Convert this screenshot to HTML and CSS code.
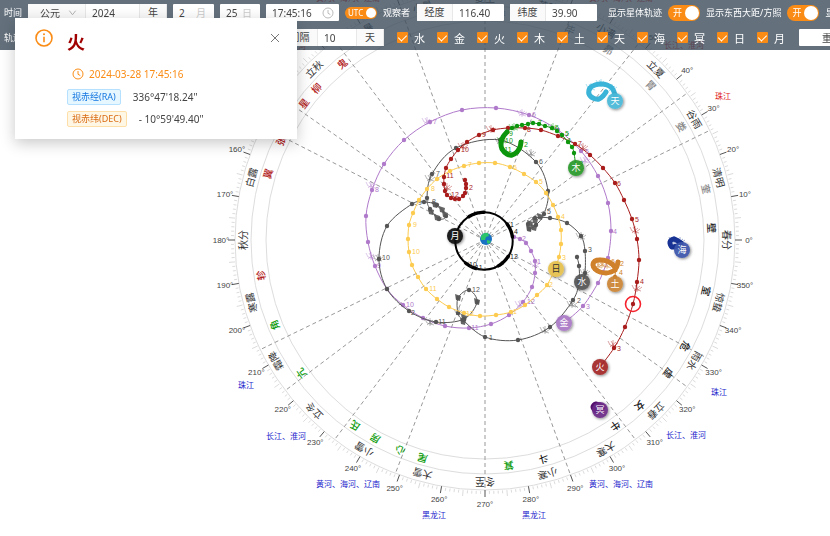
FILE: index.html
```html
<!DOCTYPE html>
<html lang="zh-CN">
<head>
    <meta charset="UTF-8">
    <meta name="viewport" content="width=device-width, initial-scale=1.0">
    <title>星体轨迹</title>
    <link rel="stylesheet" href="styles.css">
</head>
<body>
    <main class="sky">
        <svg id="chart" class="chart" viewBox="0 0 830 536" role="img" aria-label="星体轨迹图">
            <defs>
                <filter id="shadow" x="-50%" y="-50%" width="200%" height="200%">
                    <feDropShadow dx="1" dy="1" stdDeviation="1.5" flood-color="#000" flood-opacity="0.5"/>
                </filter>
            </defs>
            <g id="dial"></g>
            <g id="tracks"></g>
            <g id="bodies"></g>
        </svg>
    </main>

    <header class="toolbar">
        <div class="row">
            <span class="label">时间</span>
            <div class="group">
                <div class="select">
                    <select aria-label="纪元"><option>公元</option><option>公元前</option></select>
                    <svg viewBox="0 0 10 10"><path d="M1.5 3 L5 7.5 L8.5 3"/></svg>
                </div>
                <input class="year" type="text" value="2024" aria-label="年份">
                <span class="addon year-unit">年</span>
            </div>
            <div class="picker month-picker">
                <input type="text" value="2" aria-label="月份"><span>月</span>
            </div>
            <div class="picker day">
                <input type="text" value="25" aria-label="日期"><span>日</span>
            </div>
            <div class="picker time">
                <input type="text" value="17:45:16" aria-label="时刻">
                <svg viewBox="0 0 12 12"><circle cx="6" cy="6" r="5"/><path d="M6 3 V6.3 L8.3 7.5"/></svg>
            </div>
            <button class="switch small" type="button" role="switch" aria-checked="true">UTC</button>
            <span class="label observer">观察者</span>
            <div class="group">
                <label class="addon coord" for="lng">经度</label>
                <input class="value" id="lng" type="text" value="116.40">
            </div>
            <div class="group">
                <label class="addon coord" for="lat">纬度</label>
                <input class="value" id="lat" type="text" value="39.90">
            </div>
            <span class="label spaced">显示星体轨迹</span>
            <button class="switch" type="button" role="switch" aria-checked="true" aria-label="显示星体轨迹">开</button>
            <span class="label">显示东西大距/方照</span>
            <button class="switch" type="button" role="switch" aria-checked="true" aria-label="显示东西大距/方照">开</button>
            <span class="label">显示留</span>
        </div>
        <div class="row">
            <span class="label">轨迹</span>
            <div class="group range">
                <label class="addon coord" for="span">时长</label>
                <input id="span" type="text" value="365">
                <span class="addon unit">天</span>
            </div>
            <div class="group interval">
                <label class="addon coord" for="step">间隔</label>
                <input id="step" type="text" value="10">
                <span class="addon unit">天</span>
            </div>
            <div class="checks">
                <label><input type="checkbox" checked>水</label>
                <label><input type="checkbox" checked>金</label>
                <label><input type="checkbox" checked>火</label>
                <label><input type="checkbox" checked>木</label>
                <label><input type="checkbox" checked>土</label>
                <label><input type="checkbox" checked>天</label>
                <label><input type="checkbox" checked>海</label>
                <label><input type="checkbox" checked>冥</label>
                <label><input type="checkbox" checked>日</label>
                <label><input type="checkbox" checked>月</label>
            </div>
            <button class="reset" type="button">重置</button>
        </div>
    </header>

    <section class="notice" role="alert">
        <svg class="info" viewBox="0 0 18 18">
            <circle cx="9" cy="9" r="8"/>
            <path d="M9 7.8 V13.2"/>
            <circle class="dot" cx="9" cy="5.2" r="1"/>
        </svg>
        <div class="notice-body">
            <h2>火</h2>
            <p class="moment">
                <svg viewBox="0 0 12 12"><circle cx="6" cy="6" r="5"/><path d="M6 3 V6.3 L8.3 7.5"/></svg>
                2024-03-28 17:45:16
            </p>
            <p><span class="tag blue">视赤经(RA)</span>336°47'18.24"</p>
            <p><span class="tag orange">视赤纬(DEC)</span>- 10°59'49.40"</p>
        </div>
        <button class="close" type="button" aria-label="关闭">
            <svg viewBox="0 0 10 10"><path d="M1 1 L9 9 M9 1 L1 9"/></svg>
        </button>
    </section>

    <script src="script.js"></script>
</body>
</html>
```

FILE: styles.css
```css
* {
    margin: 0;
    padding: 0;
    box-sizing: border-box;
}

body {
    font-family: "Noto Sans", "Noto Sans CJK SC", sans-serif;
    font-size: 10px;
    color: #444;
    background: #fff;
    overflow: hidden;
}

input, select, button {
    font: inherit;
    color: inherit;
    border: 0;
    outline: 0;
    background: none;
    min-width: 0;
}

/* chart */
.sky {
    height: 100vh;
}

.chart {
    display: block;
    width: 100%;
    height: 100%;
}

.chart text {
    text-anchor: middle;
    dominant-baseline: central;
}

.ring {
    fill: none;
    stroke: #ddd;
}

.ray {
    stroke: #999;
    stroke-dasharray: 4 3;
}

.tick { stroke: #ccc; stroke-width: 0.7; }
.tick.major { stroke: #555; stroke-width: 1; }

.degree {
    font: 8px "Liberation Sans", Arial, sans-serif;
    fill: #444;
}

.term { font-size: 10px; fill: #333; }
.mansion { font-size: 10px; font-weight: 500; }
.river { font-size: 8px; }

.track {
    fill: none;
    stroke-linejoin: round;
    stroke-linecap: round;
}

.month {
    font: 7px "Liberation Sans", Arial, sans-serif;
}

.station {
    fill: none;
    stroke-width: 0.7;
    opacity: 0.6;
}

.name { font-size: 9px; }

/* toolbar */
.toolbar {
    position: fixed;
    top: 0;
    left: 0;
    right: 0;
    padding: 4px;
    background: rgba(61, 77, 93, 0.8);
    overflow: hidden;
}

.row {
    display: flex;
    align-items: center;
    gap: 6px;
    height: 17px;
    white-space: nowrap;
}

.row + .row {
    margin-top: 8px;
}

.row > * {
    flex-shrink: 0;
}

.label {
    font-size: 9px;
    color: #fff;
}

.observer { width: 28px; }
.spaced { margin-left: 5px; }

.group, .picker {
    display: flex;
    align-items: center;
    height: 17px;
    background: #fff;
    border-radius: 1px;
    overflow: hidden;
}

.group input {
    height: 17px;
    padding-left: 6px;
}

.addon {
    height: 17px;
    line-height: 17px;
    text-align: center;
    background: #fafafa;
    border-right: 1px solid #e8e8e8;
}

.coord { width: 36px; }
.value { width: 51px; }

.select {
    position: relative;
    width: 58px;
    border-right: 1px solid #e8e8e8;
}

.select select {
    width: 100%;
    height: 17px;
    padding-left: 12px;
    appearance: none;
    background: #fafafa;
}

.select svg {
    position: absolute;
    right: 8px;
    top: 4px;
    width: 9px;
    fill: none;
    stroke: #aaa;
    pointer-events: none;
}

.year { width: 53px; }
.year-unit { width: 28px; border-left: 1px solid #e8e8e8; }

.picker {
    padding: 0 8px 0 6px;
}

.picker input {
    flex: 1;
    height: 17px;
}

.picker span { color: #ccc; }

.picker svg {
    width: 12px;
    fill: none;
    stroke: #bbb;
}

.month-picker { width: 41px; }
.day { width: 40px; }
.time { width: 73px; padding-right: 5px; }

.switch {
    position: relative;
    width: 32px;
    height: 16px;
    padding-left: 5px;
    line-height: 16px;
    font-size: 9px;
    text-align: left;
    color: #fff;
    background: #fa8c16;
    border-radius: 8px;
}

.switch::after {
    content: '';
    position: absolute;
    top: 1px;
    right: 1px;
    width: 14px;
    height: 14px;
    border-radius: 50%;
    background: #fff;
}

.switch.small {
    height: 12px;
    padding-left: 3px;
    line-height: 12px;
    font-size: 8px;
}

.switch.small::after {
    width: 10px;
    height: 10px;
}

.range { width: 120px; }
.range input { width: 56px; }
.interval { margin-left: 128px; }
.interval input { width: 38px; }
.unit { width: 28px; border-left: 1px solid #e8e8e8; }

.checks {
    display: flex;
    padding-left: 7px;
    color: #fff;
    font-size: 11px;
}

.checks label {
    display: flex;
    align-items: center;
    gap: 6px;
    width: 40px;
}

.checks label:last-child {
    width: 36px;
}

.checks input {
    width: 11px;
    height: 11px;
    appearance: none;
    background: #fa8c16;
    border-radius: 1px;
    display: grid;
    place-items: center;
}

.checks input::after {
    content: '';
    width: 4px;
    height: 7px;
    margin-bottom: 2px;
    border: solid #fff;
    border-width: 0 1px 1px 0;
    transform: rotate(45deg);
}

.reset {
    width: 66px;
    height: 17px;
    background: #fff;
    border-radius: 1px;
}

/* notification */
.notice {
    position: fixed;
    top: 18px;
    left: 15px;
    display: flex;
    width: 282px;
    padding: 11px 17px 12px 20px;
    background: #fff;
    box-shadow: 0 4px 14px rgba(0, 0, 0, 0.22);
}

.info {
    width: 18px;
    height: 18px;
    fill: none;
    stroke: #fa8c16;
    stroke-width: 1.6;
}

.info .dot {
    fill: #fa8c16;
    stroke: none;
}

.notice-body {
    flex: 1;
    padding-left: 14px;
}

.notice h2 {
    height: 26px;
    margin-bottom: 11px;
    font-size: 18px;
    line-height: 26px;
    color: #a00000;
}

.notice p {
    display: flex;
    align-items: center;
    height: 16px;
    margin-bottom: 6px;
}

.notice p:last-child {
    margin-bottom: 0;
}

.notice .moment {
    gap: 5px;
    padding-left: 5px;
    margin-bottom: 7px;
    color: #fa8c16;
}

.moment svg {
    width: 12px;
    fill: none;
    stroke: #fa8c16;
}

.tag {
    height: 16px;
    margin-right: 12px;
    padding: 0 4px;
    font-size: 9px;
    line-height: 14px;
    border: 1px solid;
    border-radius: 2px;
}

.tag.blue { color: #1677e0; background: #e6f7ff; border-color: #b5e0ff; }
.tag.orange { color: #d96a10; background: #fff7e6; border-color: #ffdfa8; }

.close {
    align-self: flex-start;
    width: 10px;
    height: 10px;
    margin-top: 4px;
}

.close svg {
    display: block;
    fill: none;
    stroke: #777;
}
```

FILE: script.js
```js
const CX = 485;
const CY = 240;
const dial = document.getElementById('dial');
const tracks = document.getElementById('tracks');
const bodies = document.getElementById('bodies');

function add(parent, tag, attrs, text) {
    const el = document.createElementNS('http://www.w3.org/2000/svg', tag);
    for (const key in attrs) el.setAttribute(key, attrs[key]);
    if (text) el.textContent = text;
    parent.appendChild(el);
    return el;
}

// angle is counted counterclockwise from the spring equinox
function polar(deg, r) {
    const a = deg * Math.PI / 180;
    return [CX + r * Math.cos(a), CY - r * Math.sin(a)];
}

function radial(cls, deg, r1, r2) {
    const [x1, y1] = polar(deg, r1);
    const [x2, y2] = polar(deg, r2);
    add(dial, 'line', { class: cls, x1, y1, x2, y2 });
}

// dial
[219, 234, 250].forEach(r => add(dial, 'circle', { class: 'ring', cx: CX, cy: CY, r }));

[26, 36, 52, 69, 90, 110, 127, 145, 153, 206, 217, 233, 249, 270, 290, 307, 324, 332]
    .forEach(deg => radial('ray', deg, 6, 248));

for (let d = 0; d < 360; d++) {
    if (d % 10 === 0) {
        radial('tick major', d, 250, 257);
        const [x, y] = polar(d, 264);
        // labels above the window's top edge are left out
        if (y > -8) add(dial, 'text', { class: 'degree', x, y }, d + '°');
    } else {
        radial('tick', d, 251, d % 5 === 0 ? 257 : 254);
    }
}

const terms = ['春分', '清明', '谷雨', '立夏', '小满', '芒种', '夏至', '小暑', '大暑', '立秋', '处暑', '白露',
    '秋分', '寒露', '霜降', '立冬', '小雪', '大雪', '冬至', '小寒', '大寒', '立春', '雨水', '惊蛰'];
terms.forEach((name, i) => {
    const [x, y] = polar(i * 15, 242);
    add(dial, 'text', { class: 'term', x, y, transform: `rotate(${90 - i * 15} ${x} ${y})` }, name);
});

// 28 mansions, grouped by quadrant
const mansions = {
    '#888': [['奎', 13], ['娄', 30], ['胃', 43], ['昴', 57], ['毕', 68], ['觜', 82], ['参', 86]],
    '#b22222': [['井', 95], ['鬼', 129], ['柳', 138], ['星', 143], ['张', 154], ['翼', 163], ['轸', 189]],
    '#0a9a0a': [['角', 202], ['亢', 216], ['氐', 235], ['房', 241], ['心', 248], ['尾', 254], ['箕', 276]],
    '#222': [['斗', 285], ['牛', 305], ['女', 313], ['虚', 324], ['危', 332], ['室', 347], ['壁', 3]]
};
for (const fill in mansions) {
    mansions[fill].forEach(([name, deg]) => {
        const [x, y] = polar(deg, 227);
        add(dial, 'text', { class: 'mansion', x, y, fill, transform: `rotate(${90 - deg} ${x} ${y})` }, name);
    });
}

const rivers = [
    ['珠江', 723, 95, '#e02020'], ['长江、淮河', 684, 44, '#e02020'], ['黄河、海河、辽南', 621, -3, '#e02020'],
    ['长江、淮河', 286, 45, '#e02020'], ['黄河、海河、辽南', 348, -3, '#e02020'],
    ['珠江', 719, 391, '#2222cc'], ['长江、淮河', 686, 434, '#2222cc'], ['黄河、海河、辽南', 621, 483, '#2222cc'],
    ['黑龙江', 534, 514, '#2222cc'], ['黑龙江', 434, 514, '#2222cc'], ['黄河、海河、辽南', 348, 483, '#2222cc'],
    ['长江、淮河', 286, 435, '#2222cc'], ['珠江', 246, 384, '#2222cc']
];
rivers.forEach(([name, x, y, fill]) => add(dial, 'text', { class: 'river', x, y, fill }, name));

// smooth curve through all points
function smooth(pts) {
    let d = `M${pts[0]}`;
    for (let i = 0; i < pts.length - 1; i++) {
        const a = pts[i - 1] || pts[i];
        const b = pts[i];
        const c = pts[i + 1];
        const e = pts[i + 2] || c;
        d += `C${b[0] + (c[0] - a[0]) / 6},${b[1] + (c[1] - a[1]) / 6} ${c[0] - (e[0] - b[0]) / 6},${c[1] - (e[1] - b[1]) / 6} ${c}`;
    }
    return d;
}

const orbits = [
    {
        color: '#b07acb',
        pts: [[564,323],[583,306],[598,283],[603,272],[608,258],[611,231],[608,203],[598,176],[581,151],[558,130],[529,115],[496,108],[462,110],[430,122],[404,140],[384,164],[372,190],[366,216],[368,242],[375,266],[387,289],[403,305],[423,318],[445,326],[469,328],[491,324],[509,315],[523,302],[532,287],[535,273],[535,261],[531,251],[526,243],[520,239],[514,237]],
        months: [[3,588,306],[4,615,231],[5,587,151],[6,534,114],[7,435,121],[8,377,189],[9,379,265],[10,410,304],[11,475,327],[12,531,301],[1,539,261],[2,524,238]],
        stations: [[522,113],[427,121],[371,185],[371,256],[585,160],[535,264],[520,304]]
    },
    {
        color: '#555',
        pts: [[577,257],[579,266],[579,282],[573,300],[550,327],[518,340],[485,337],[463,320],[458,313],[458,298],[469,290],[477,302],[464,319],[436,322],[409,311],[387,289],[379,259],[387,226],[412,204],[424,202],[437,205],[446,216],[439,219],[430,209],[427,198],[432,174],[456,148],[500,140],[536,162],[548,191],[544,214],[536,225],[529,229],[528,224],[535,218],[550,218],[567,223],[581,236],[585,251],[585,273],[582,282]],
        months: [[1,491,337],[2,579,300],[3,590,249],[5,549,211],[6,541,161],[7,438,173],[8,434,201],[9,420,202],[10,386,257],[11,442,321],[12,476,289],[2,413,312]],
        stations: [[572,304],[545,330],[378,258],[430,178],[500,141],[531,153],[459,312],[581,236],[430,322],[585,272]]
    },
    {
        color: '#fccb4f',
        pts: [[555,269],[547,285],[537,295],[525,305],[511,312],[496,315],[480,316],[464,313],[449,307],[437,299],[426,289],[418,277],[412,265],[409,252],[408,239],[409,225],[413,213],[419,200],[427,189],[437,179],[450,171],[464,166],[479,163],[495,163],[510,167],[524,174],[536,182],[546,193],[553,205],[558,217],[561,230],[561,244],[559,257],[555,269]],
        months: [[2,551,284],[3,564,257],[4,563,216],[5,541,181],[6,515,167],[7,470,164],[8,433,188],[9,415,224],[10,416,251],[11,433,288],[12,470,313],[1,515,311]],
        stations: []
    },
    {
        color: '#a81c1c',
        pts: [[600,367],[614,348],[625,327],[633,304],[637,282],[639,260],[637,239],[632,219],[624,200],[615,183],[603,168],[590,155],[575,144],[558,136],[541,130],[525,128],[508,128],[493,130],[479,135],[467,142],[458,150],[451,159],[446,168],[444,177],[444,184],[445,191],[447,195],[451,198],[455,199],[459,199],[463,196],[465,193],[466,188],[466,184],[465,180]],
        months: [[3,619,348],[4,642,281],[5,637,219],[6,619,183],[7,580,143],[8,529,129],[9,484,134],[10,465,149],[11,450,175],[12,455,194],[2,471,187]],
        stations: [[635,230],[637,288],[583,147],[463,146],[613,344],[447,187],[491,129]]
    },
    {
        color: '#0d960d',
        pts: [[576,168],[574,153],[572,147],[568,142],[562,135],[557,131],[552,128],[545,126],[539,124],[533,123],[528,124],[522,125],[517,126],[512,128],[507,132],[503,137],[501,143],[502,149],[507,154],[512,155],[517,152],[520,147],[521,142]],
        thick: 14,
        months: [[3,581,163],[4,569,140],[5,567,133],[6,557,127],[7,540,122],[9,511,133],[10,509,140],[11,508,149],[2,526,144]],
        stations: [[502,140],[514,127],[553,127]]
    },
    {
        color: '#d0812b',
        pts: [[615,284],[615,277],[615,270],[611,272],[606,273],[600,272],[595,269],[593,265],[595,261],[600,260],[607,261],[612,264],[616,268],[618,262]],
        thick: 2,
        months: [[2,622,263],[4,621,272],[6,613,261]],
        stations: [[602,264],[598,265],[607,265]]
    },
    {
        color: '#3bb4d8',
        pts: [[615,101],[615,95],[612,88],[607,85],[601,84],[595,85],[590,88],[589,94],[593,98],[599,99],[603,96],[606,92]],
        thick: 0,
        months: [],
        stations: [[591,87],[601,83],[612,88]]
    },
    {
        color: '#193494',
        pts: [[681,249],[677,246],[672,247],[670,242],[674,239],[681,243]],
        thick: 0,
        months: [],
        stations: [[674,240],[680,241]]
    },
    {
        color: '#55106f',
        pts: [[600,410],[596,411],[593,407],[596,404],[603,407],[597,407]],
        thick: 0,
        months: [],
        stations: []
    }
];

orbits.forEach(o => {
    add(tracks, 'path', { class: 'track', d: smooth(o.pts), stroke: o.color, 'stroke-width': 1 });
    if (o.thick !== undefined) {
        add(tracks, 'path', { class: 'track', d: smooth(o.pts.slice(o.thick)), stroke: o.color, 'stroke-width': 5 });
    }
    o.pts.forEach(([cx, cy]) => add(tracks, 'circle', { cx, cy, r: 2.2, fill: o.color }));
    o.months.forEach(([m, x, y]) => add(tracks, 'text', { class: 'month', x, y, fill: o.color }, String(m)));
    o.stations.forEach(([x, y]) => add(tracks, 'path', {
        class: 'station', stroke: o.color,
        d: `M${x - 5} ${y - 3}l2 4l7 2M${x - 2} ${y - 3}l3 5l4 -3M${x} ${y - 4}v8M${x - 3} ${y + 3}l6 -5`
    }));
});

// clusters of slow mercury days
[[435,204],[442,209],[445,214],[437,217],[431,211],[464,317],[458,297],[477,301],[463,321],[530,223],[535,220],[540,216],[534,227],[529,228]]
    .forEach(([x, y]) => add(tracks, 'path', { d: `M${x - 3} ${y - 3}l6 2l-1 5l-4 -1z`, fill: '#555', opacity: 0.9 }));

// moon orbit, thicker where the days crowd together
add(tracks, 'circle', { class: 'track', cx: 484, cy: 241, r: 28.7, stroke: '#000', 'stroke-width': 2 });
[[90, 124], [8, 38], [300, 330], [230, 254]].forEach(([from, to]) => {
    const pts = [];
    for (let d = from; d <= to; d += 4) {
        const a = d * Math.PI / 180;
        pts.push([484 + 28.7 * Math.cos(a), 241 - 28.7 * Math.sin(a)]);
    }
    add(tracks, 'path', { class: 'track', d: smooth(pts), stroke: '#000', 'stroke-width': 3.4 });
});
[[1,512,224],[4,516,231],[12,514,256],[11,479,267],[10,473,264]]
    .forEach(([m, x, y]) => add(tracks, 'text', { class: 'month', x, y, fill: '#222' }, String(m)));

// earth
add(bodies, 'circle', { cx: 486, cy: 239, r: 6, fill: '#1871c2' });
add(bodies, 'path', { d: 'M481 236q3 -4 7 -3l1 3l-3 1l-1 3l-4 0zM487 240l4 1l-2 3l-2 -1z', fill: '#2bc46a' });

const discs = [
    ['月', 455, 236, '#111', '#fff'], ['日', 556, 269, '#e6c04c', '#333'], ['水', 582, 282, '#555', '#fff'],
    ['金', 564, 323, '#a878c4', '#fff'], ['火', 600, 367, '#a32626', '#fff'], ['木', 576, 168, '#2a992a', '#fff'],
    ['土', 615, 284, '#cb8535', '#fff'], ['天', 615, 101, '#4ab8d8', '#fff'], ['海', 682, 250, '#3a54aa', '#fff'],
    ['冥', 600, 410, '#6a2a86', '#fff']
];
discs.forEach(([name, x, y, fill, color]) => {
    add(bodies, 'circle', { cx: x, cy: y, r: 8, fill, filter: 'url(#shadow)', opacity: 0.93 });
    add(bodies, 'text', { class: 'name', x, y: y - 1, fill: color }, name);
});

// selected position
add(bodies, 'circle', { cx: 633, cy: 304, r: 7.5, fill: 'none', stroke: '#f5222d', 'stroke-width': 1.6 });
```
